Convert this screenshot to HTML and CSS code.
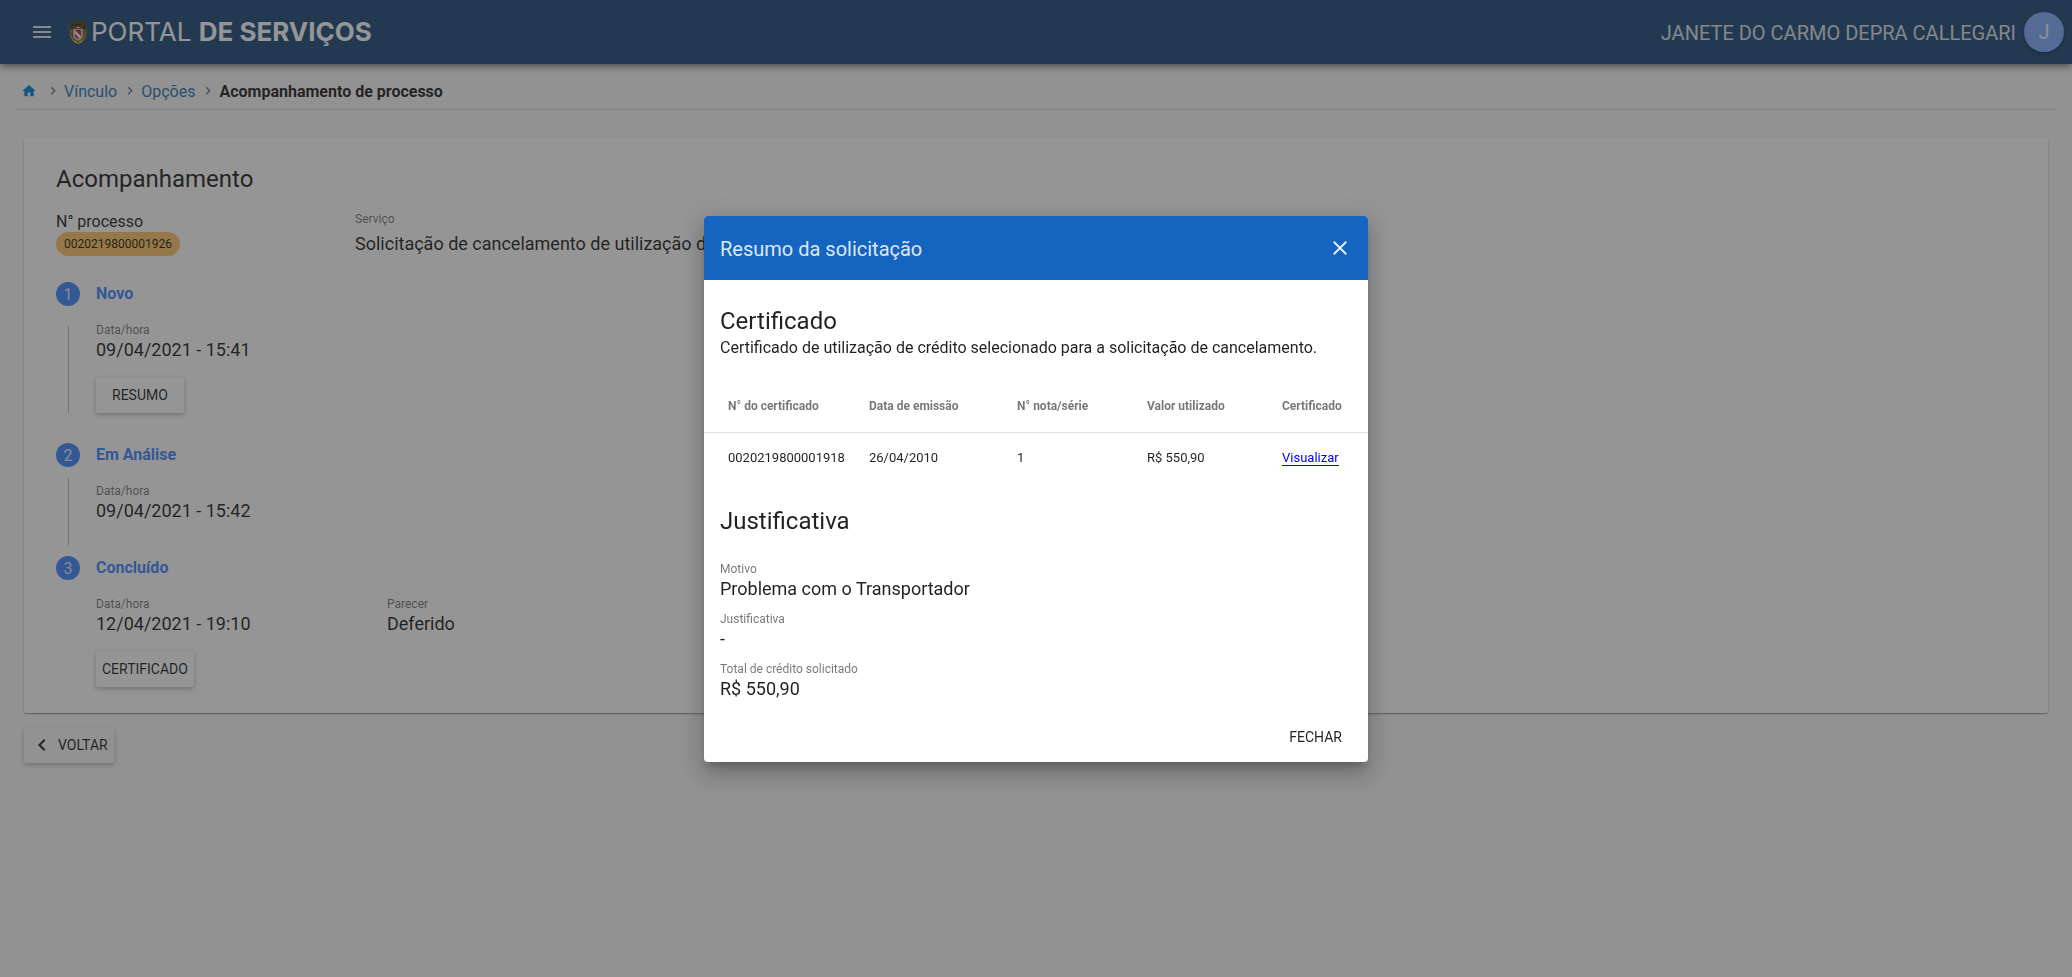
FILE: index.html
```html
<!DOCTYPE html>
<html lang="pt-BR">
<head>
<meta charset="utf-8">
<meta name="viewport" content="width=device-width, initial-scale=1">
<title>Portal de Serviços</title>
<link rel="stylesheet" href="styles.css">
</head>
<body>
<header class="topbar">
  <button class="menu-button" type="button" aria-label="Menu">
    <svg width="24" height="24" viewBox="0 0 24 24" fill="currentColor"><path d="M3 18h18v-2H3v2zm0-5h18v-2H3v2zm0-7v2h18V6H3z"/></svg>
  </button>
  <a class="brand" href="#">
    <svg class="crest" width="20" height="26" viewBox="0 0 20 26">
      <path d="M10 1C5 1 1 4 .5 9c-.3 4 .5 8 2 11 2 3 5 4 7 5l3-1c3-1 5-3 6-6 1-3 1.500-6 1-9C19 4 15 1 10 1z" fill="#5d5a35"/>
      <path d="M2 9C2 4 6 2 10 2s8 2 8 7l-3 1-2-2H7l-2 2z" fill="#42351f"/>
      <path d="M5 5l3-2M9 4h3M13 4l3 3M3 9l4-2M15 9l-3-2" stroke="#8a6d35" stroke-width="1"/>
      <path d="M2 11l2 2-2 2 2 2-1 2 3 1M18 11l-2 2 2 2-2 2 1 2-3 1" fill="none" stroke="#a5a04a" stroke-width="1"/>
      <path d="M5 10h10v6c0 3-2 5-5 6-3-1-5-3-5-6z" fill="#b9c1c9"/>
      <path d="M7 12h6v5c0 1-1 2-3 3-2-1-3-2-3-3z" fill="#f4eeee"/>
      <path d="M7 11l6 6v-5l-1-1zM7 15l4 4-1 1c-2-1-3-2-3-3z" fill="#e0152c"/>
      <path d="M8 9l2-2 2 2z" fill="#d8d8cf"/>
      <path d="M4 20l4 2 2 2 2-2 4-2-2 3-4 2-4-2z" fill="#d9c32c"/>
    </svg>
    <span class="brand-text">PORTAL <b>DE SERVIÇOS</b></span>
  </a>
  <span class="user-name">JANETE DO CARMO DEPRA CALLEGARI</span>
  <button class="avatar" type="button">J</button>
</header>

<nav class="breadcrumb" aria-label="Navegação">
  <a class="home" href="#" aria-label="Início">
    <svg width="16" height="16" viewBox="0 0 24 24" fill="currentColor"><path d="M10 20v-6h4v6h5v-8h3L12 3 2 12h3v8z"/></svg>
  </a>
  <svg class="sep" width="16" height="16" viewBox="0 0 24 24" fill="currentColor"><path d="M8.590 16.340L13.170 11.750 8.590 7.160 10 5.750l6 6-6 6z"/></svg>
  <a href="#">Vínculo</a>
  <svg class="sep" width="16" height="16" viewBox="0 0 24 24" fill="currentColor"><path d="M8.590 16.340L13.170 11.750 8.590 7.160 10 5.750l6 6-6 6z"/></svg>
  <a href="#">Opções</a>
  <svg class="sep" width="16" height="16" viewBox="0 0 24 24" fill="currentColor"><path d="M8.590 16.340L13.170 11.750 8.590 7.160 10 5.750l6 6-6 6z"/></svg>
  <b>Acompanhamento de processo</b>
</nav>

<main class="page">
  <section class="card">
    <h1 class="heading">Acompanhamento</h1>
    <div class="process">
      <div class="process-id">
        <span>N° processo</span>
        <span class="chip">0020219800001926</span>
      </div>
      <div class="service">
        <span class="label">Serviço</span>
        <span class="value">Solicitação de cancelamento de utilização de</span>
      </div>
    </div>
    <ol class="steps">
      <li class="step">
        <div class="step-title"><span class="step-number">1</span><b>Novo</b></div>
        <div class="step-body">
          <div class="step-content">
            <div class="fields">
              <div class="field"><span class="label">Data/hora</span><span class="value">09/04/2021 - 15:41</span></div>
            </div>
            <button class="button wide" type="button">RESUMO</button>
          </div>
        </div>
      </li>
      <li class="step">
        <div class="step-title"><span class="step-number">2</span><b>Em Análise</b></div>
        <div class="step-body">
          <div class="step-content">
            <div class="fields">
              <div class="field"><span class="label">Data/hora</span><span class="value">09/04/2021 - 15:42</span></div>
            </div>
          </div>
        </div>
      </li>
      <li class="step">
        <div class="step-title"><span class="step-number">3</span><b>Concluído</b></div>
        <div class="step-body">
          <div class="step-content">
            <div class="fields">
              <div class="field"><span class="label">Data/hora</span><span class="value">12/04/2021 - 19:10</span></div>
              <div class="field"><span class="label">Parecer</span><span class="value">Deferido</span></div>
            </div>
            <button class="button" type="button">CERTIFICADO</button>
          </div>
        </div>
      </li>
    </ol>
  </section>
  <button class="button back" type="button">
    <svg width="24" height="24" viewBox="0 0 24 24" fill="currentColor"><path d="M15.410 7.410L14 6l-6 6 6 6 1.410-1.410L10.830 12z"/></svg>
    VOLTAR
  </button>
</main>

<div class="overlay">
  <section class="dialog" role="dialog" aria-modal="true" aria-labelledby="dialog-title">
    <header class="dialog-bar">
      <h2 id="dialog-title">Resumo da solicitação</h2>
      <button class="close" type="button" aria-label="Fechar janela">
        <svg width="24" height="24" viewBox="0 0 24 24" fill="currentColor"><path d="M19 6.410L17.590 5 12 10.590 6.410 5 5 6.410 10.590 12 5 17.590 6.410 19 12 13.410 17.590 19 19 17.590 13.410 12z"/></svg>
      </button>
    </header>
    <div class="intro">
      <h3 class="heading">Certificado</h3>
      <p>Certificado de utilização de crédito selecionado para a solicitação de cancelamento.</p>
    </div>
    <table class="certs">
      <colgroup><col class="col-number"><col class="col-date"><col class="col-invoice"><col class="col-amount"><col></colgroup>
      <thead>
        <tr><th>N° do certificado</th><th>Data de emissão</th><th>N° nota/série</th><th>Valor utilizado</th><th>Certificado</th></tr>
      </thead>
      <tbody>
        <tr><td>0020219800001918</td><td>26/04/2010</td><td>1</td><td>R$ 550,90</td><td><a href="#">Visualizar</a></td></tr>
      </tbody>
    </table>
    <div class="reason">
      <h3 class="heading">Justificativa</h3>
      <div class="reason-fields">
        <div class="field"><span class="label">Motivo</span><span class="value">Problema com o Transportador</span></div>
        <div class="field"><span class="label">Justificativa</span><span class="value">-</span></div>
        <div class="field"><span class="label">Total de crédito solicitado</span><span class="value">R$ 550,90</span></div>
      </div>
    </div>
    <footer class="actions"><button class="flat" type="button">FECHAR</button></footer>
  </section>
</div>
</body>
</html>
```
FILE: styles.css
```css
* { box-sizing: border-box; }

body {
  margin: 0;
  min-height: 100vh;
  background: #fafafa;
  color: rgba(0, 0, 0, .87);
  font: 16px/24px Roboto, sans-serif;
}

h1, h2, h3, p, ol { margin: 0; padding: 0; }
button { border: 0; padding: 0; background: none; color: inherit; font: inherit; cursor: pointer; }
svg { display: block; flex: none; }

.topbar {
  display: flex;
  align-items: center;
  height: 64px;
  padding: 0 8px 0 30px;
  background: #24507d;
  color: rgba(255, 255, 255, .87);
  box-shadow: 0 2px 4px -1px rgba(0, 0, 0, .3), 0 4px 8px rgba(0, 0, 0, .3);
}
.brand { display: flex; align-items: center; gap: 3px; margin-left: 14px; color: #fff; text-decoration: none; }
.brand-text { font: 26px/32px Inter, sans-serif; }
.user-name { margin-left: auto; padding-top: 2px; font-size: 20px; }
.avatar {
  width: 40px;
  height: 40px;
  margin-left: 8px;
  border-radius: 50%;
  background: #82b1ff;
  font-size: 20px;
  box-shadow: 0 2px 5px rgba(0, 0, 0, .26);
}

.breadcrumb {
  display: flex;
  align-items: center;
  margin: 0 16px;
  padding: 16px 0 5px 5px;
  border-bottom: 1px solid #e0e0e0;
}
.breadcrumb a { color: #337ab7; text-decoration: none; }
.breadcrumb .home { margin: 0 3px 2px 0; color: #0288d1; }
.sep { margin: 0 3px 2px 5px; color: #757575; }

.page { padding: 28px 24px 0; }
.card {
  padding: 29px 32px 26px;
  border-radius: 2px;
  background: #fff;
  box-shadow: 0 1px 3px rgba(0, 0, 0, .2), 0 1px 1px rgba(0, 0, 0, .14), 0 2px 1px -1px rgba(0, 0, 0, .12);
}
.heading { font-size: 24px; line-height: 24px; font-weight: 400; }

.process { display: flex; margin-top: 19px; }
.process-id { display: flex; flex-direction: column; align-items: flex-start; width: 299px; padding-top: 2px; line-height: 20px; }
.chip { padding: 0 8px; border-radius: 12px; background: #ffc870; font-size: 12px; line-height: 24px; }
.label, .value { display: block; }
.label { font-size: 12px; line-height: 18px; color: rgba(0, 0, 0, .54); }
.value { font-size: 18px; line-height: 22px; }
.service .value { margin-top: 5px; }

.steps { margin-top: 26px; list-style: none; }
.step-title { display: flex; align-items: center; gap: 16px; height: 24px; line-height: 26px; color: #448aff; }
.step-number { width: 24px; height: 24px; border-radius: 50%; background: #448aff; color: rgba(255, 255, 255, .87); text-align: center; }
.step-body { display: flex; min-height: 78px; margin-bottom: 11px; padding-left: 12px; }
.step-body::before { content: ""; width: 1px; margin: 11px 27px 0 0; background: #bdbdbd; }
.step:first-child .step-body { margin-bottom: 30px; }
.step:first-child .step-body::before { margin-top: 20px; }
.step:last-child .step-body { margin-bottom: 0; }
.step:last-child .step-body::before { visibility: hidden; }
.step-content { padding-top: 15px; }
.fields { display: flex; }
.fields .field { width: 291px; }
.button {
  margin-top: 16px;
  padding: 0 6px;
  border-radius: 2px;
  font-size: 14px;
  line-height: 36px;
  box-shadow: 0 2px 5px rgba(0, 0, 0, .26);
}
.button.wide { padding: 0 16px; }
.button.back { display: flex; align-items: center; gap: 4px; margin-top: 14px; }

.overlay {
  position: fixed;
  inset: 0;
  display: flex;
  align-items: center;
  justify-content: center;
  background: rgba(33, 33, 33, .48);
}
.dialog {
  width: 664px;
  max-width: 90%;
  border-radius: 4px;
  overflow: hidden;
  background: #fff;
  box-shadow: 0 7px 8px -4px rgba(0, 0, 0, .2), 0 13px 19px 2px rgba(0, 0, 0, .14), 0 5px 24px 4px rgba(0, 0, 0, .12);
}
.dialog-bar {
  display: flex;
  align-items: center;
  justify-content: space-between;
  height: 64px;
  padding: 0 16px;
  background: #1565c0;
  color: rgba(255, 255, 255, .87);
}
.dialog-bar h2 { padding-top: 2px; font-size: 20px; font-weight: 400; }
.intro { padding: 29px 16px 18px; }
.intro p { line-height: 30px; }
.certs { width: 100%; border-collapse: collapse; table-layout: fixed; text-align: left; }
.col-number { width: 165px; }
.col-date { width: 148px; }
.col-invoice { width: 130px; }
.col-amount { width: 135px; }
.certs th { height: 52px; padding: 0; border-bottom: 1px solid #e0e0e0; font-size: 12px; color: rgba(0, 0, 0, .54); }
.certs td { height: 50px; padding: 0; font-size: 13px; }
.certs th:first-child, .certs td:first-child { padding-left: 24px; }
.certs a { border-bottom: 1px solid; color: #0000ee; text-decoration: none; }
.reason { padding: 26px 16px 0; }
.reason-fields { display: grid; gap: 10px; margin-top: 27px; }
.actions { display: flex; justify-content: flex-end; padding: 19px 16px 7px; }
.flat { padding: 0 10px; font-size: 14px; line-height: 36px; }
```
